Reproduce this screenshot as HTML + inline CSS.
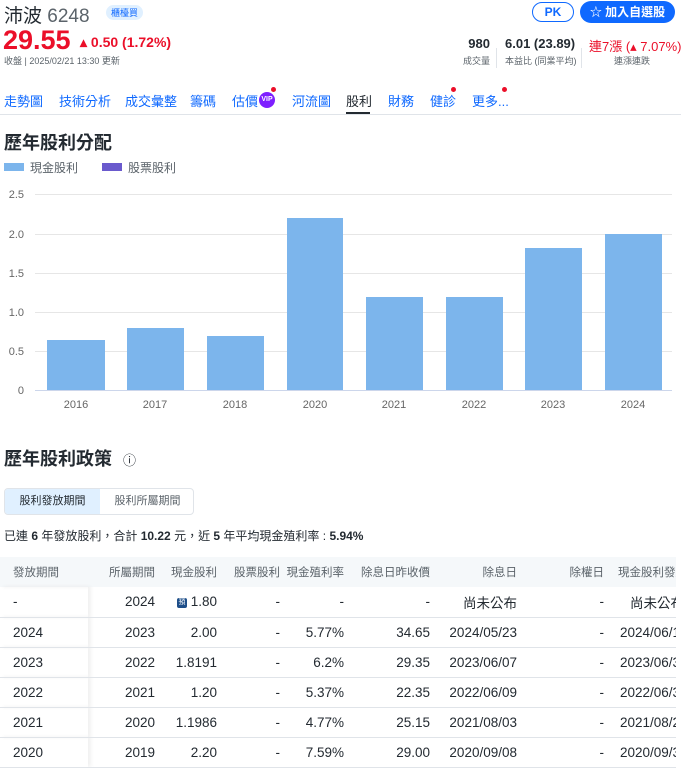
<!DOCTYPE html>
<html><head><meta charset="utf-8"><style>
*{margin:0;padding:0;box-sizing:border-box}
body{width:681px;height:764px;overflow:hidden;background:#fff;font-family:"Liberation Sans","Noto Sans CJK TC",sans-serif;color:#232a31;position:relative}
.a{position:absolute;white-space:nowrap}
.blue{color:#0f69ff}
.red{color:#eb0f29}
.g{color:#5b636a}
table{border-collapse:collapse;font-size:13.5px}
td{height:30px;text-align:right;padding:0;border-bottom:1px solid #e0e4e9;white-space:nowrap}
tr.h td{background:#f5f8fa;color:#5b636a;border-bottom:none;height:30px;font-size:11.5px}
td.f{text-align:left;padding-left:13px;width:88px;box-shadow:3px 0 4px rgba(0,0,0,.06)}
</style></head><body>
<div class="a" style="left:4px;top:1px;font-size:19px;color:#232a31">沛波 <span style="color:#5b636a">6248</span></div>
<div class="a" style="left:106px;top:5px;font-size:9px;background:#e0f0ff;color:#0f69ff;padding:1px 5px;border-radius:8px">櫃檯買</div>
<div class="a red" style="left:3px;top:25px;font-size:27px;font-weight:bold">29.55</div>
<div class="a red" style="left:80px;top:34px;font-size:14px;font-weight:bold">▴ 0.50 (1.72%)</div>
<div class="a g" style="left:4px;top:54px;font-size:9px">收盤 | 2025/02/21 13:30 更新</div>
<div class="a" style="left:532px;top:2px;width:42px;height:20px;border:1px solid #0f69ff;border-radius:10px;color:#0f69ff;font-size:12px;font-weight:bold;text-align:center;line-height:18px">PK</div>
<div class="a" style="left:580px;top:1px;width:95px;height:22px;background:#0f69ff;border-radius:11px;color:#fff;font-size:12px;font-weight:bold;text-align:center;line-height:22px">☆ 加入自選股</div>
<div class="a" style="left:440px;top:36px;width:50px;text-align:right;font-size:13px;font-weight:bold">980</div>
<div class="a g" style="left:440px;top:54px;width:50px;text-align:right;font-size:9px">成交量</div>
<div class="a" style="left:496px;top:48px;height:20px;border-left:1px solid #e0e4e9"></div>
<div class="a" style="left:505px;top:36px;font-size:13px;font-weight:bold">6.01 (23.89)</div>
<div class="a g" style="left:505px;top:54px;font-size:9px">本益比 (同業平均)</div>
<div class="a" style="left:581px;top:48px;height:20px;border-left:1px solid #e0e4e9"></div>
<div class="a red" style="left:589px;top:36px;font-size:13px">連7漲 (▴ 7.07%)</div>
<div class="a g" style="left:614px;top:54px;font-size:9px">連漲連跌</div>
<div class="a blue" style="left:4px;top:91px;font-size:13px">走勢圖</div>
<div class="a blue" style="left:59px;top:91px;font-size:13px">技術分析</div>
<div class="a blue" style="left:125px;top:91px;font-size:13px">成交彙整</div>
<div class="a blue" style="left:190px;top:91px;font-size:13px">籌碼</div>
<div class="a blue" style="left:232px;top:91px;font-size:13px">估價</div>
<div class="a" style="left:259px;top:92px;width:16px;height:16px;border-radius:8px;background:#7e1fff;color:#fff;font-size:7px;font-weight:bold;text-align:center;line-height:16px">VIP</div>
<div class="a" style="left:271px;top:87px;width:5px;height:5px;border-radius:3px;background:#eb0f29"></div>
<div class="a blue" style="left:292px;top:91px;font-size:13px">河流圖</div>
<div class="a" style="left:346px;top:91px;font-size:13px">股利</div>
<div class="a" style="left:346px;top:112px;width:24px;height:3px;background:#232a31"></div>
<div class="a blue" style="left:388px;top:91px;font-size:13px">財務</div>
<div class="a blue" style="left:430px;top:91px;font-size:13px">健診</div>
<div class="a" style="left:451px;top:87px;width:5px;height:5px;border-radius:3px;background:#eb0f29"></div>
<div class="a blue" style="left:472px;top:91px;font-size:13px">更多...</div>
<div class="a" style="left:502px;top:87px;width:5px;height:5px;border-radius:3px;background:#eb0f29"></div>
<div class="a" style="left:0;top:114px;width:681px;border-top:1px solid #e0e4e9"></div>
<div class="a" style="left:4px;top:129px;font-size:18px;font-weight:bold">歷年股利分配</div>
<div class="a" style="left:4px;top:163px;width:20px;height:8px;background:#7cb5ec"></div>
<div class="a g" style="left:30px;top:159px;font-size:12px">現金股利</div>
<div class="a" style="left:102px;top:163px;width:20px;height:8px;background:#6a5acd"></div>
<div class="a g" style="left:128px;top:159px;font-size:12px">股票股利</div>
<svg class="a" style="left:0;top:180px" width="681" height="240">
<g stroke="#e6e6e6" stroke-width="1">
<line x1="35" x2="672" y1="14.5" y2="14.5"/><line x1="35" x2="672" y1="54.5" y2="54.5"/><line x1="35" x2="672" y1="93.5" y2="93.5"/><line x1="35" x2="672" y1="132.5" y2="132.5"/><line x1="35" x2="672" y1="171.5" y2="171.5"/></g>
<line x1="35" x2="672" y1="210.5" y2="210.5" stroke="#ccd6eb"/>
<g font-size="11" fill="#666" text-anchor="end" font-family="Liberation Sans">
<text x="24" y="18">2.5</text><text x="24" y="58">2.0</text><text x="24" y="97">1.5</text><text x="24" y="136">1.0</text><text x="24" y="175">0.5</text><text x="24" y="214">0</text></g>
<g fill="#7cb5ec">
<rect x="47" y="160" width="58" height="50"/><rect x="127" y="148" width="57" height="62"/><rect x="207" y="156" width="57" height="54"/><rect x="287" y="38" width="56" height="172"/><rect x="366" y="117" width="57" height="93"/><rect x="446" y="117" width="57" height="93"/><rect x="525" y="68" width="57" height="142"/><rect x="605" y="54" width="57" height="156"/></g>
<g font-size="11" fill="#666" text-anchor="middle" font-family="Liberation Sans">
<text x="76" y="228">2016</text><text x="155" y="228">2017</text><text x="235" y="228">2018</text><text x="315" y="228">2020</text><text x="394" y="228">2021</text><text x="474" y="228">2022</text><text x="553" y="228">2023</text><text x="633" y="228">2024</text></g>
</svg>
<div class="a" style="left:4px;top:445px;font-size:18px;font-weight:bold">歷年股利政策 <span style="font-size:13px;font-weight:normal;margin-left:6px">ⓘ</span></div>
<div class="a" style="left:4px;top:488px;width:190px;height:27px;border:1px solid #e0e4e9;border-radius:4px;font-size:11px;overflow:hidden">
<div style="position:absolute;left:0;top:0;width:95px;height:25px;background:#e0f0ff;text-align:center;line-height:25px">股利發放期間</div>
<div class="g" style="position:absolute;left:95px;top:0;width:95px;height:25px;text-align:center;line-height:25px">股利所屬期間</div></div>
<div class="a" style="left:4px;top:527px;font-size:12px">已連 <b>6</b> 年發放股利，合計 <b>10.22</b> 元，近 <b>5</b> 年平均現金殖利率 : <b>5.94%</b></div>
<div class="a" style="left:0;top:557px;width:676px;overflow:hidden">
<table style="width:760px">
<tr class="h"><td class="f">發放期間</td><td style="width:67px">所屬期間</td><td style="width:62px">現金股利</td><td style="width:63px">股票股利</td><td style="width:64px">現金殖利率</td><td style="width:86px">除息日昨收價</td><td style="width:87px">除息日</td><td style="width:87px">除權日</td><td style="width:156px;text-align:left;padding-left:14px">現金股利發放日</td></tr>
<tr><td class="f">-</td><td>2024</td><td><span style="display:inline-block;width:10px;height:10px;background:#1d4e89;color:#fff;font-size:7px;line-height:10px;text-align:center;border-radius:2px;vertical-align:middle">預</span> 1.80</td><td>-</td><td>-</td><td>-</td><td>尚未公布</td><td>-</td><td style="text-align:left;padding-left:26px">尚未公布</td></tr>
<tr><td class="f">2024</td><td>2023</td><td>2.00</td><td>-</td><td>5.77%</td><td>34.65</td><td>2024/05/23</td><td>-</td><td style="text-align:left;padding-left:16px">2024/06/14</td></tr>
<tr><td class="f">2023</td><td>2022</td><td>1.8191</td><td>-</td><td>6.2%</td><td>29.35</td><td>2023/06/07</td><td>-</td><td style="text-align:left;padding-left:16px">2023/06/30</td></tr>
<tr><td class="f">2022</td><td>2021</td><td>1.20</td><td>-</td><td>5.37%</td><td>22.35</td><td>2022/06/09</td><td>-</td><td style="text-align:left;padding-left:16px">2022/06/30</td></tr>
<tr><td class="f">2021</td><td>2020</td><td>1.1986</td><td>-</td><td>4.77%</td><td>25.15</td><td>2021/08/03</td><td>-</td><td style="text-align:left;padding-left:16px">2021/08/27</td></tr>
<tr><td class="f">2020</td><td>2019</td><td>2.20</td><td>-</td><td>7.59%</td><td>29.00</td><td>2020/09/08</td><td>-</td><td style="text-align:left;padding-left:16px">2020/09/30</td></tr>
</table></div>
</body></html>
